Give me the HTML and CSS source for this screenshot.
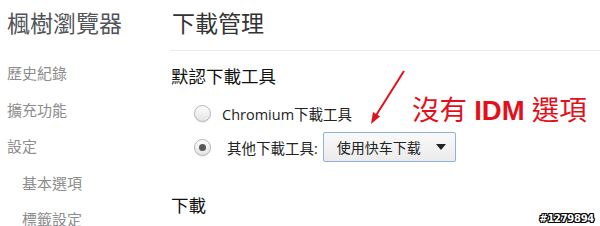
FILE: index.html
```html
<!DOCTYPE html>
<html lang="zh-Hant">

<head>
    <meta charset="UTF-8">
    <meta name="viewport" content="width=device-width, initial-scale=1.0">
    <title>下載管理</title>
    <link rel="stylesheet" href="styles.css">
</head>

<body>
    <div class="page">
        <aside class="sidebar">
            <h1 class="brand">楓樹瀏覽器</h1>
            <ul class="nav">
                <li>歷史紀錄</li>
                <li>擴充功能</li>
                <li>設定</li>
                <li class="sub">基本選項</li>
                <li class="sub">標籤設定</li>
            </ul>
        </aside>

        <main class="content">
            <div class="content-head">
                <h1>下載管理</h1>
            </div>

            <h3 class="section-title">默認下載工具</h3>
            <div class="radio-row">
                <span class="radio"></span>
                <span class="radio-label">Chromium下載工具</span>
            </div>
            <div class="radio-row">
                <span class="radio checked"></span>
                <span class="radio-label other">其他下載工具:</span>
                <span class="select">使用快车下载<span class="caret"></span></span>
            </div>

            <h3 class="section-title downloads">下載</h3>
        </main>

        <!-- annotation drawn over the screenshot -->
        <svg class="arrow" width="600" height="226" viewBox="0 0 600 226">
            <line x1="404" y1="71" x2="375" y2="117" stroke="#e3101b" stroke-width="2" />
            <polygon points="371,124 380,116.5 373,112" fill="#e3101b" />
        </svg>
        <div class="note">沒有 <b>IDM</b> 選項</div>

        <div class="watermark">#1279894</div>
    </div>
</body>

</html>
```

FILE: styles.css
```css
* {
    box-sizing: border-box;
}

body {
    margin: 0;
    background: #fff;
    font-family: "Open Sans", "Noto Sans CJK TC", sans-serif;
}

.page {
    position: relative;
    display: flex;
    width: 600px;
    height: 226px;
    overflow: hidden;
}

.sidebar {
    width: 170px;
    flex: none;
    padding-left: 7px;
}

.brand {
    margin: 0;
    font-size: 23px;
    line-height: 46px;
    font-weight: normal;
    color: #52525a;
}

.nav {
    list-style: none;
    margin: 20px 0 0 0;
    padding: 0;
    display: flex;
    flex-direction: column;
    gap: 22.5px;
}

.nav li {
    font-size: 15px;
    line-height: 14px;
    color: #8d8d8d;
}

.nav .sub {
    padding-left: 15px;
}

.content {
    flex: 1;
}

.content-head {
    border-bottom: 1px solid #ececec;
    padding-bottom: 3px;
}

.content-head h1 {
    margin: 0 0 0 2px;
    font-size: 23px;
    line-height: 47px;
    font-weight: normal;
    color: #333;
}

.section-title {
    margin: 10px 0 0 1px;
    font-size: 17.5px;
    line-height: 30px;
    font-weight: normal;
    color: #111;
}

.section-title.downloads {
    margin-top: 26px;
}

.radio-row {
    display: flex;
    align-items: center;
    height: 34px;
    margin-top: 5px;
    padding-left: 24px;
}

.radio-row + .radio-row {
    margin-top: 0;
}

.radio {
    width: 17px;
    height: 17px;
    border-radius: 50%;
    border: 1px solid #b5b5b5;
    background: linear-gradient(#fdfdfd, #e4e4e4);
    box-shadow: 0 1px 1px rgba(0, 0, 0, 0.08);
    position: relative;
    flex: none;
}

.radio.checked::after {
    content: "";
    position: absolute;
    left: 4px;
    top: 4px;
    width: 7px;
    height: 7px;
    border-radius: 50%;
    background: #585858;
}

.radio-label {
    margin-left: 11px;
    font-size: 14.5px;
    color: #222;
}

.radio-label.other {
    margin-left: 16px;
}

.select {
    display: flex;
    align-items: center;
    justify-content: space-between;
    width: 133px;
    height: 30px;
    margin-left: 5px;
    padding: 0 9px 0 13px;
    border: 1px solid #8fb1dc;
    border-radius: 2px;
    background: linear-gradient(#f9f9f9, #ebebeb);
    font-size: 14px;
    color: #222;
}

.caret {
    width: 0;
    height: 0;
    border-left: 5px solid transparent;
    border-right: 5px solid transparent;
    border-top: 6px solid #222;
}

.arrow {
    position: absolute;
    left: 0;
    top: 0;
}

.note {
    position: absolute;
    left: 412px;
    top: 94px;
    font-size: 27.5px;
    line-height: 32px;
    color: #e3101b;
    white-space: nowrap;
}

.note b {
    font-family: "Liberation Sans", sans-serif;
    font-weight: bold;
}

.watermark {
    position: absolute;
    right: 6px;
    bottom: 2px;
    font-family: "DejaVu Sans", sans-serif;
    font-size: 10px;
    font-weight: bold;
    color: #fff;
    letter-spacing: -0.3px;
    text-shadow: 1px 0 #000, -1px 0 #000, 0 1px #000, 0 -1px #000,
        1px 1px #000, -1px -1px #000, 1px -1px #000, -1px 1px #000;
}
```
